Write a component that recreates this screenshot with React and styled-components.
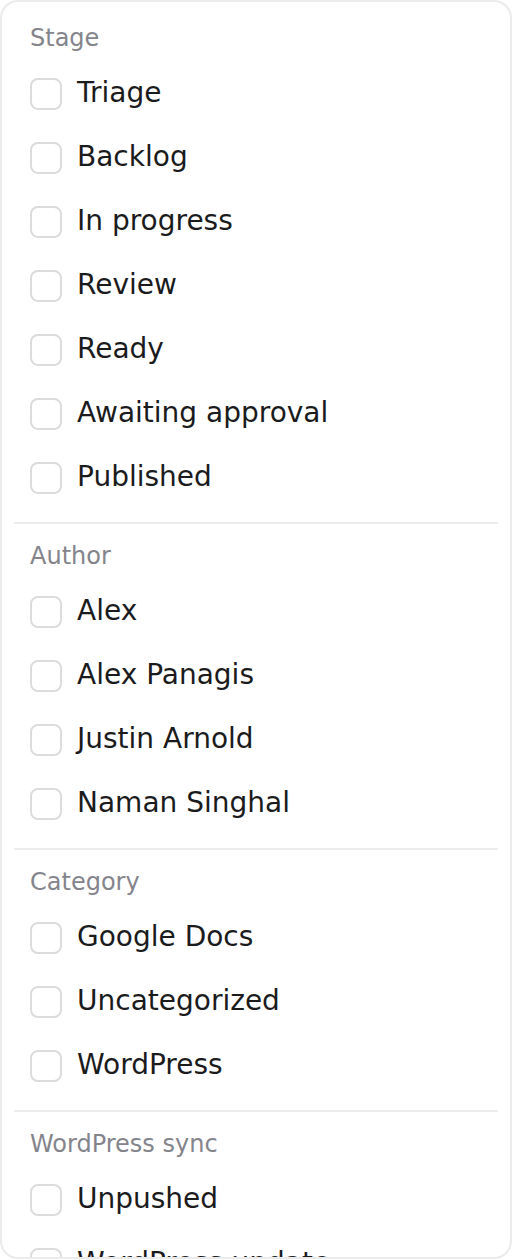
import React from 'react';
import styled, { createGlobalStyle } from 'styled-components';

const GlobalStyle = createGlobalStyle`
  html, body {
    margin: 0;
    padding: 0;
    background: #ffffff;
  }
  body {
    font-family: 'DejaVu Sans', 'Noto Sans', sans-serif;
    -webkit-font-smoothing: antialiased;
  }
`;

const Panel = styled.div`
  box-sizing: border-box;
  width: 512px;
  height: 1259px;
  padding: 8px 12px;
  background: #ffffff;
  border: 2px solid #ebebec;
  border-radius: 18px;
  overflow: hidden;
`;

const Group = styled.div`
  display: flex;
  flex-direction: column;
`;

const Separator = styled.div`
  height: 2px;
  margin: 12px 0 4px;
  background: #ececed;
`;

const GroupLabel = styled.div`
  padding: 12px 16px 8px;
  font-size: 24px;
  line-height: 32px;
  color: #84848c;
`;

const Option = styled.label`
  display: flex;
  align-items: center;
  gap: 15px;
  height: 64px;
  padding: 0 16px;
  font-size: 28px;
  line-height: 32px;
  color: #1b1b1d;
  cursor: pointer;
`;

const OptionText = styled.span`
  margin-bottom: 2px;
`;

const Box = styled.span`
  box-sizing: border-box;
  flex: 0 0 32px;
  width: 32px;
  height: 32px;
  border: 2px solid #dcdcdf;
  border-radius: 8px;
  background: #ffffff;
`;

const groups = [
  { label: 'Stage', options: ['Triage', 'Backlog', 'In progress', 'Review', 'Ready', 'Awaiting approval', 'Published'] },
  { label: 'Author', options: ['Alex', 'Alex Panagis', 'Justin Arnold', 'Naman Singhal'] },
  { label: 'Category', options: ['Google Docs', 'Uncategorized', 'WordPress'] },
  { label: 'WordPress sync', options: ['Unpushed', 'WordPress update', 'Synced'] },
];

const App = () => (
  <>
    <GlobalStyle />
    <Panel>
      {groups.map((g, i) => (
        <React.Fragment key={g.label}>
          {i > 0 && <Separator />}
          <Group>
            <GroupLabel>{g.label}</GroupLabel>
            {g.options.map(o => (
              <Option key={o}>
                <Box />
                <OptionText>{o}</OptionText>
              </Option>
            ))}
          </Group>
        </React.Fragment>
      ))}
    </Panel>
  </>
);

export default App;
